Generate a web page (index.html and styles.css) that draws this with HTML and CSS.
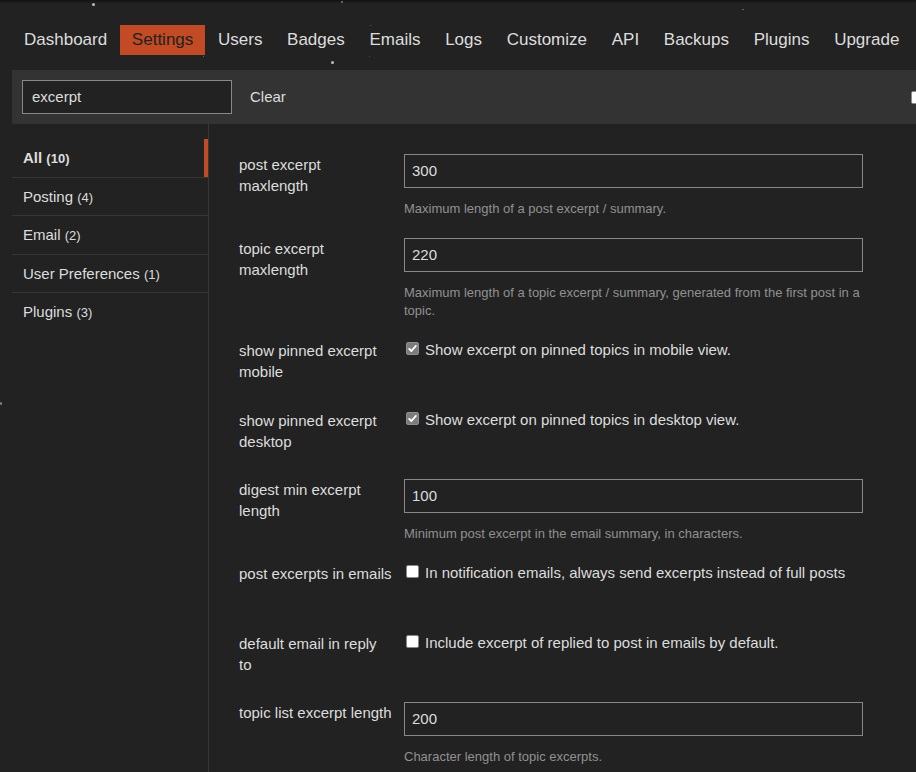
FILE: index.html
```html
<!DOCTYPE html>
<html lang="en">
<head>
<meta charset="utf-8">
<title>Admin Settings</title>
<link rel="stylesheet" href="styles.css">
</head>
<body>
<div class="top-band"></div>
<div class="page">
  <nav class="tabs">
    <a class="tab">Dashboard</a>
    <a class="tab active">Settings</a>
    <a class="tab">Users</a>
    <a class="tab">Badges</a>
    <a class="tab">Emails</a>
    <a class="tab">Logs</a>
    <a class="tab">Customize</a>
    <a class="tab">API</a>
    <a class="tab">Backups</a>
    <a class="tab">Plugins</a>
    <a class="tab">Upgrade</a>
  </nav>

  <div class="filter-bar">
    <input class="filter-input" type="text" value="excerpt">
    <span class="clear-btn">Clear</span>
    <span class="edge-check"></span>
  </div>

  <div class="main">
    <aside class="sidebar">
      <ul class="cats">
        <li class="cat active"><span class="cat-name">All</span> <span class="count">(10)</span></li>
        <li class="cat"><span class="cat-name">Posting</span> <span class="count">(4)</span></li>
        <li class="cat"><span class="cat-name">Email</span> <span class="count">(2)</span></li>
        <li class="cat"><span class="cat-name">User Preferences</span> <span class="count">(1)</span></li>
        <li class="cat"><span class="cat-name">Plugins</span> <span class="count">(3)</span></li>
      </ul>
    </aside>

    <section class="settings">
      <div class="setting">
        <div class="label">post excerpt maxlength</div>
        <div class="value">
          <input class="text-input" type="text" value="300">
          <div class="desc">Maximum length of a post excerpt / summary.</div>
        </div>
      </div>

      <div class="setting">
        <div class="label">topic excerpt maxlength</div>
        <div class="value">
          <input class="text-input" type="text" value="220">
          <div class="desc">Maximum length of a topic excerpt / summary, generated from the first post in a topic.</div>
        </div>
      </div>

      <div class="setting">
        <div class="label">show pinned excerpt mobile</div>
        <div class="value check-row">
          <span class="box checked"><svg viewBox="0 0 13 13" width="13" height="13"><path d="M3.2 6.8 L5.4 9 L9.9 3.9" fill="none" stroke="#fff" stroke-width="1.8" stroke-linecap="round" stroke-linejoin="round"/></svg></span>
          <span class="check-text">Show excerpt on pinned topics in mobile view.</span>
        </div>
      </div>

      <div class="setting">
        <div class="label">show pinned excerpt desktop</div>
        <div class="value check-row">
          <span class="box checked"><svg viewBox="0 0 13 13" width="13" height="13"><path d="M3.2 6.8 L5.4 9 L9.9 3.9" fill="none" stroke="#fff" stroke-width="1.8" stroke-linecap="round" stroke-linejoin="round"/></svg></span>
          <span class="check-text">Show excerpt on pinned topics in desktop view.</span>
        </div>
      </div>

      <div class="setting">
        <div class="label">digest min excerpt length</div>
        <div class="value">
          <input class="text-input" type="text" value="100">
          <div class="desc">Minimum post excerpt in the email summary, in characters.</div>
        </div>
      </div>

      <div class="setting">
        <div class="label">post excerpts in emails</div>
        <div class="value check-row">
          <span class="box"></span>
          <span class="check-text">In notification emails, always send excerpts instead of full posts</span>
        </div>
      </div>

      <div class="setting">
        <div class="label">default email in reply to</div>
        <div class="value check-row">
          <span class="box"></span>
          <span class="check-text">Include excerpt of replied to post in emails by default.</span>
        </div>
      </div>

      <div class="setting">
        <div class="label">topic list excerpt length</div>
        <div class="value">
          <input class="text-input" type="text" value="200">
          <div class="desc">Character length of topic excerpts.</div>
        </div>
      </div>
    </section>
  </div>
</div>

<span class="flake f1"></span>
<span class="flake f2"></span>
<span class="flake f3"></span>
<span class="flake f4"></span>
<span class="flake f5"></span>
<span class="flake f6"></span>
<span class="flake f7"></span>
<span class="flake f8"></span>
</body>
</html>
```

FILE: styles.css
```css
html, body {
  margin: 0;
  padding: 0;
}

body {
  background: #222222;
  color: #dddddd;
  font-family: "Liberation Sans", Arial, sans-serif;
  overflow: hidden;
  height: 772px;
  position: relative;
}

.top-band {
  height: 3px;
  background: linear-gradient(#141414, #1d1d1d);
}

.page {
  padding-left: 12px;
}

.tabs {
  display: flex;
  column-gap: 0.7px;
  margin-top: 22px;
  height: 30px;
}

.tab {
  display: block;
  padding: 0 12px;
  font-size: 17px;
  line-height: 30px;
  color: #dddddd;
  white-space: nowrap;
}

.tab.active {
  background: #c24a24;
  color: #222222;
}

.filter-bar {
  margin-top: 15px;
  height: 54px;
  box-sizing: border-box;
  padding: 10px;
  background: #333333;
  display: flex;
  align-items: center;
  overflow: hidden;
}

.filter-input {
  box-sizing: border-box;
  width: 210px;
  height: 34px;
  margin: 0;
  border: 1px solid #888888;
  background: #222222;
  color: #dddddd;
  font-family: "Liberation Sans", Arial, sans-serif;
  font-size: 15px;
  padding: 0 9px 2px;
  outline: none;
}

.clear-btn {
  margin-left: 18px;
  margin-bottom: 2px;
  font-size: 15px;
  color: #dddddd;
}

.edge-check {
  margin-left: auto;
  margin-right: -18px;
  width: 13px;
  height: 13px;
  box-sizing: border-box;
  background: #ffffff;
  border: 1px solid #8a8a8a;
  border-radius: 2px;
  flex: 0 0 13px;
}

.main {
  display: flex;
  min-height: 648px;
}

.sidebar {
  width: 196px;
  flex: 0 0 196px;
  border-right: 1px solid #363636;
  padding-top: 15px;
}

.cats {
  list-style: none;
  margin: 0;
  padding: 0;
}

.cat {
  padding: 8px 11px;
  line-height: 21.5px;
  border-bottom: 1px solid #363636;
  font-size: 15px;
  color: #dddddd;
}

.cat:last-child {
  border-bottom: none;
}

.cat .count {
  font-size: 13px;
  line-height: 1;
}

.cat.active {
  font-weight: bold;
  box-shadow: inset -4px 0 0 #c24a24;
}

.settings {
  flex: 1;
  padding: 30px 0 0 30px;
}

.setting {
  display: flex;
  align-items: flex-start;
  margin-bottom: 20px;
}

.label {
  flex: 0 0 153.5px;
  margin-right: 11.5px;
  font-size: 15px;
  line-height: 21px;
  color: #dddddd;
}

.value {
  width: 459px;
}

.text-input {
  display: block;
  box-sizing: border-box;
  width: 459px;
  height: 34px;
  margin: 0;
  border: 1px solid #888888;
  background: #222222;
  color: #dddddd;
  font-family: "Liberation Sans", Arial, sans-serif;
  font-size: 15px;
  padding: 0 7px 2px;
  outline: none;
}

.desc {
  margin-top: 12px;
  font-size: 13px;
  line-height: 18px;
  color: #919191;
}

.check-row {
  display: flex;
  align-items: flex-start;
  min-height: 50px;
  margin-top: -1px;
  margin-bottom: 0.5px;
}

.box {
  flex: 0 0 13px;
  width: 13px;
  height: 13px;
  box-sizing: border-box;
  margin: 3px 6px 0 2px;
  border-radius: 2px;
  background: #ffffff;
  border: 1px solid #8a8a8a;
}

.box svg {
  display: block;
  margin: -1px;
}

.box.checked {
  background: #7c7c7c;
  border-color: #8e8e8e;
}

.check-text {
  font-size: 15px;
  line-height: 21px;
  color: #dddddd;
}

.flake {
  position: absolute;
  border-radius: 50%;
  background: #bdbdbd;
}

.f1 { left: 92px; top: 3px; width: 3px; height: 3px; }
.f2 { left: 331px; top: 61px; width: 3px; height: 3px; }
.f3 { left: 341px; top: 1px; width: 2px; height: 2px; background: #777; }
.f4 { left: 370px; top: 25px; width: 1px; height: 1px; background: #666; }
.f5 { left: 203px; top: 56px; width: 1px; height: 1px; background: #777; }
.f6 { left: 369px; top: 56px; width: 1px; height: 1px; background: #555; }
.f7 { left: 742px; top: 9px; width: 2px; height: 1px; background: #777; }
.f8 { left: 0px; top: 402px; width: 2px; height: 3px; background: #888; }
```
